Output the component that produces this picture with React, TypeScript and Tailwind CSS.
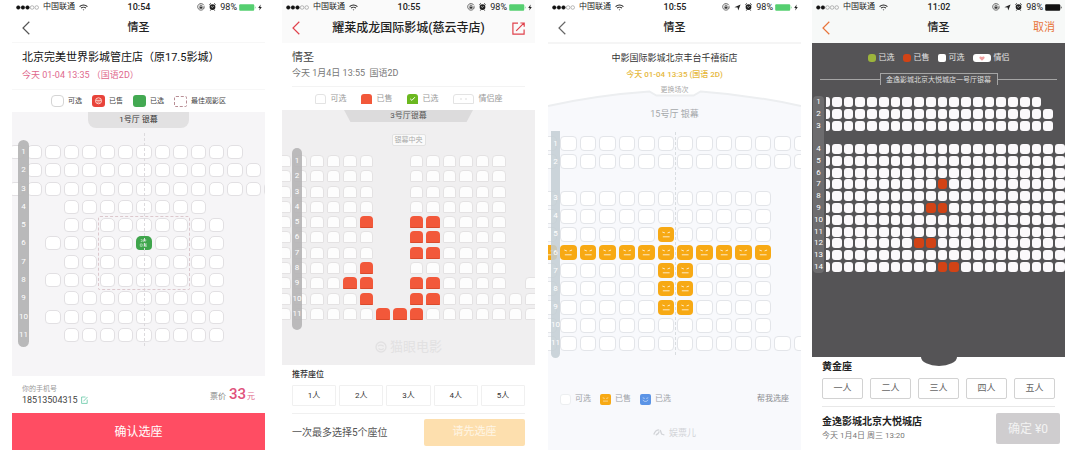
import React from 'react';
import clsx from 'clsx';

type Theme = 'pink' | 'maoyan' | 'yellow' | 'dark';

// o = free, x = sold, s = selected, . = aisle
const PINK_ROWS = [
  'ooooooooooooo..',
  '.ooooooooooooo.',
  'ooooooooooooooo',
  '...oooooooo....',
  '...ooooooooo...',
  '..ooooosoooo...',
  '...ooooooooo...',
  '..oooooooooo...',
  '...ooooooooo...',
  '..oooooooooo...',
  '...ooooooooo...',
];

const MAOYAN_ROWS = [
  'oooooo..oooooo..',
  'oooooo..oooooo..',
  'oooooo..oooooo..',
  'oooooo..oooooo..',
  'ooooox..xxoooo..',
  'oooooo..xxoooo..',
  'oooooo..xxoooo..',
  'ooooox..oooooo..',
  'ooooxx..xxoooo.o',
  'ooooox..xxoooooo',
  'ooooooxxxooooooo',
];

const YELLOW_ROWS = [
  'oooooooooooooo',
  'oooooooooooooo',
  '..............',
  'oooooooooooo..',
  'oooooooooooo..',
  'ooooooxooooo..',
  'xxxxxxxxxxxx..',
  'ooooooxxoooo..',
  'ooooooxxoooo..',
  'ooooooxxoooo..',
  'oooooooooooo..',
  'oooooooooooooo',
];

const DARK_ROWS = [
  'ooooooooooooooooooo..',
  'oooooooooooooooooooo.',
  'oooooooooooooooooooo.',
  '.....................',
  'ooooooooooooooooooooo',
  'ooooooooooooooooooooo',
  'ooooooooooooooooooooo',
  'ooooooooooxoooooooooo',
  'ooooooooooooooooooooo',
  'oooooooooxxoooooooooo',
  'ooooooooooooooooooooo',
  'ooooooooooooooooooooo',
  'ooooooooxxooooooooooo',
  'ooooooooooooooooooooo',
  'ooooooooooxxooooooooo',
];

const seatShape: Record<Theme, string> = {
  pink: 'h-[14px] rounded-t-[5px] rounded-b-[4px]',
  maoyan: 'h-3 rounded-t-[4px] rounded-b-[1px]',
  yellow: 'h-[15px] rounded-[4px]',
  dark: 'h-[10px] rounded-[3px]',
};

const seatColor: Record<Theme, Record<string, string>> = {
  pink: {
    o: 'bg-white border border-[#e2e0e3]',
    x: 'bg-[#e8433a]',
    s: 'bg-[#3fa54c]',
  },
  maoyan: {
    o: 'bg-[#fdfdfd] border border-[#e4e2e3]',
    x: 'bg-[#f2583a] border-b border-[#d94a2c]',
    s: 'bg-[#6bb81f]',
  },
  yellow: {
    o: 'bg-white border border-[#e3e5e9]',
    x: 'bg-[#f7a914]',
    s: 'bg-[#5b94e6]',
  },
  dark: {
    o: 'bg-[#fbf9fb]',
    x: 'bg-[#d24315]',
    s: 'bg-[#9cb43c]',
  },
};

const rowGrid: Record<Theme, string> = {
  pink: 'grid-cols-15 gap-x-[3px] -ml-[3px] -mr-[14px]',
  maoyan: 'grid-cols-16 gap-x-[3px] -ml-[5px] -mr-1',
  yellow: 'grid-cols-14 gap-x-[3px] -ml-[7px] -mr-[9px]',
  dark: 'grid-cols-21 gap-x-[2px] -ml-[6px]',
};

const Face = ({ smile }: { smile?: boolean }) => (
  <svg viewBox="0 0 16 15" className="w-full h-full" fill="none" stroke="#fff" strokeWidth="1" strokeLinecap="round">
    <path d="M4.500 5.200l1.800.6M11.500 5.200l-1.800.6" opacity=".75" />
    <path d={smile ? 'M4.500 8.500c1 2.600 6 2.600 7 0' : 'M5 9.800h6'} opacity=".75" />
  </svg>
);

const SeatMark = ({ theme, kind }: { theme: Theme; kind: string }) => {
  if (theme === 'yellow' && kind !== 'o') return <Face smile={kind === 's'} />;
  if (theme === 'pink' && kind === 's') {
    return (
      <svg viewBox="0 0 16 14" className="w-full h-full" fill="none" stroke="#b9e3be" strokeWidth=".8">
        <path d="M5 3.500h1.500v2H5M8 3v3M8 4h3M9.500 3v3M4.500 8h2v2.500h-2zM8 8h3.500M8 9.300h3.500M8 10.500h3.500M9.800 8v2.500" />
      </svg>
    );
  }
  return null;
};

const SeatMap = ({ theme, rows, name }: { theme: Theme; rows: string[]; name: string }) => (
  <div className="flex flex-col justify-between h-full" role="group" aria-label={name}>
    {rows.map((row, r) => (
      <div key={r} className={clsx('grid', rowGrid[theme])}>
        {row.split('').map((kind, c) =>
          kind === '.' ? (
            <span key={c} className={seatShape[theme]} />
          ) : (
            <button
              key={c}
              type="button"
              disabled={kind === 'x'}
              aria-pressed={kind === 's'}
              className={clsx('block min-w-0 overflow-hidden', seatShape[theme], seatColor[theme][kind])}
            >
              <SeatMark theme={theme} kind={kind} />
            </button>
          )
        )}
      </div>
    ))}
  </div>
);

const RowLabels = ({ labels, className, itemClass }: { labels: string[]; className: string; itemClass: string }) => (
  <div className={clsx('absolute flex flex-col justify-between items-center text-white', className)}>
    {labels.map((l, i) => (
      <span key={i} className={clsx('flex items-center text-[8px] leading-none', itemClass)}>{l}</span>
    ))}
  </div>
);

const count = (n: number) => Array.from({ length: n }, (_, i) => String(i + 1));

interface StatusProps {
  time: string;
  dots?: number;
  location?: boolean;
  charging?: boolean;
}

const StatusLine = ({ time, dots = 3, location, charging = true }: StatusProps) => (
  <div className="flex items-center h-[14px] pl-1 pr-[3px] text-[9px] leading-none text-[#222]">
    <div className="flex flex-1 items-center gap-1">
      <svg width="23" height="5" viewBox="0 0 23 5">
        {[0, 1, 2, 3, 4].map(i => (
          <circle key={i} cx={2.3 + i * 4.6} cy="2.5" r="1.8" fill={i < dots ? '#111' : 'none'} stroke={i < dots ? '#111' : '#777'} strokeWidth=".5" />
        ))}
      </svg>
      <span className="text-[8px]">中国联通</span>
      <svg width="9" height="7" viewBox="0 0 9 7" fill="none" stroke="#222" strokeWidth="1.1">
        <path d="M.6 2.6c2.2-2.1 5.6-2.1 7.8 0M2.1 4.2c1.3-1.3 3.5-1.3 4.8 0" />
        <path d="M3.6 5.4h1.8L4.5 6.5z" fill="#222" stroke="none" />
      </svg>
    </div>
    <span className="font-medium">{time}</span>
    <div className="flex flex-1 items-center justify-end gap-1">
      <svg width="8" height="8" viewBox="0 0 8 8" fill="none" stroke="#333" strokeWidth=".7">
        <path d="M6.9 2.3A3.3 3.3 0 1 0 7.2 4.6M7.8 3.4l-.7 1.1-1-.9" />
        <path d="M3 3.8V3a1 1 0 0 1 2 0v.8" />
        <rect x="2.5" y="3.7" width="3" height="2" fill="#333" stroke="none" />
      </svg>
      {location && (
        <svg width="7" height="7" viewBox="0 0 7 7"><path d="M6.6.4L4.2 6.6 3.6 3.6.4 3.2z" fill="#222" /></svg>
      )}
      <svg width="7" height="8" viewBox="0 0 7 8">
        <path d="M.3 1.8L1.9.4M6.7 1.8L5.1.4M1.3 7.6l.9-1M5.7 7.6l-.9-1" stroke="#222" strokeWidth=".9" />
        <circle cx="3.5" cy="4.1" r="2.9" fill="#222" />
        <path d="M2.1 3.4l1.4 1 1.2-1.3" stroke="#fff" strokeWidth=".6" fill="none" />
      </svg>
      <span>98%</span>
      <div className="flex items-center gap-[2px] -ml-[2px]">
        <svg width="17" height="7" viewBox="0 0 17 7">
          <rect x=".2" y=".2" width="15" height="6.6" rx="1" fill={charging ? '#55cf70' : '#111'} />
          <path d="M15.8 2.3c1 .3 1 2.1 0 2.4z" fill={charging ? '#55cf70' : '#111'} />
        </svg>
        {charging && (
          <svg width="4" height="7" viewBox="0 0 4 7"><path d="M2.6.6L.2 3.9h1.5L1.3 6.5l2.5-3.4H2.3z" fill="#222" /></svg>
        )}
      </div>
    </div>
  </div>
);

interface NavProps {
  title: string;
  back: string;
  titleSize?: string;
  right?: React.ReactNode;
}

const NavBar = ({ title, back, titleSize = 'text-[11px]', right }: NavProps) => (
  <div className="flex items-center h-7 px-[10px]">
    <button type="button" aria-label="返回" className={clsx('w-[22px] shrink-0', back)}>
      <svg width="8" height="14" viewBox="0 0 8 14" fill="none" stroke="currentColor" strokeWidth="1.2">
        <path d="M7.3.8L1 7l6.3 6.2" />
      </svg>
    </button>
    <h1 className={clsx('flex-1 text-center whitespace-nowrap font-medium text-[#222]', titleSize)}>{title}</h1>
    <div className="flex w-[22px] shrink-0 justify-end">{right}</div>
  </div>
);

const Phone = ({ className, children }: { className?: string; children: React.ReactNode }) => (
  <section className={clsx('flex flex-col flex-1 min-w-0 bg-white', className)}>{children}</section>
);

const PinkPhone = () => (
  <Phone className="mr-[6px]">
    <StatusLine time="10:54" />
    <NavBar title="情圣" back="text-[#555]" />
    <div className="flex flex-col justify-center gap-1 h-12 px-[10px] border-y border-[#f7f7f7] whitespace-nowrap">
      <h2 className="text-[11px] leading-[14px] text-[#111]">北京完美世界影城管庄店（原17.5影城）</h2>
      <p className="text-[9px] leading-3 text-[#e0688d]">今天 01-04 13:35 （国语2D）</p>
    </div>
    <div className="flex items-center justify-center gap-[10px] h-[22px] text-[7px] text-[#444]">
      <span className="flex items-center gap-1"><i className="w-[13px] h-3 rounded-[4px] border border-[#d5d5d5]" />可选</span>
      <span className="flex items-center gap-1">
        <i className="w-[13px] h-3 rounded-[3px] bg-[#e8433a]">
          <svg viewBox="0 0 13 12" fill="none" stroke="#ffe3da" strokeWidth=".9"><circle cx="6.5" cy="5.8" r="3" /><path d="M4 5.3h5M5.2 7h2.6" /></svg>
        </i>
        已售
      </span>
      <span className="flex items-center gap-1"><i className="w-[13px] h-3 rounded-[3px] bg-[#43a952]" />已选</span>
      <span className="flex items-center gap-1"><i className="w-[13px] h-[11px] rounded-[2px] border border-dashed border-[#b98f96]" />最佳观影区</span>
    </div>
    <div className="relative flex-1 bg-[#f6f5f7] overflow-hidden">
      <div className="mx-auto w-[101px] h-4 rounded-b-[8px] bg-[#e2e1e2] text-center text-[8px] leading-4 text-[#333]">1号厅 银幕</div>
      <div className="relative mt-[17px] h-[197px]">
        <SeatMap theme="pink" rows={PINK_ROWS} name="1号厅" />
        <div className="absolute left-[132px] -top-3 -bottom-1 border-l border-dashed border-[#dcdadd]" />
        <div className="absolute left-[86px] top-[71px] w-[92px] h-[74px] border border-dashed border-[#dcc8cd] rounded-[2px] pointer-events-none" />
        <RowLabels labels={count(11)} className="left-[6px] -top-[5px] -bottom-[5px] py-[5px] w-[11px] rounded-full bg-[#b3b3b3]/90" itemClass="h-[14px]" />
      </div>
    </div>
    <div className="flex items-center justify-between h-[37px] px-[10px]">
      <div>
        <p className="text-[7px] leading-[10px] text-[#999]">你的手机号</p>
        <p className="flex items-center gap-[3px] text-[9px] leading-3 text-[#444]">
          18513504315
          <svg width="7" height="8" viewBox="0 0 7 8" fill="none" stroke="#63c6a4" strokeWidth=".8">
            <path d="M4.5 1H.6v6.4h5.6V3.6M2.4 5.3L6.6.9" />
          </svg>
        </p>
      </div>
      <p className="flex items-baseline gap-px text-[8px] text-[#888]">
        票价<b className="ml-[2px] text-[15px] leading-none font-medium text-[#e0527c]">33</b><span className="text-[#e0688d]">元</span>
      </p>
    </div>
    <button type="button" className="h-[37px] bg-[#ff4d63] text-[12px] text-white">确认选座</button>
  </Phone>
);

const MaoyanPhone = () => (
  <Phone className="mr-[2px]">
    <div className="bg-[#fafafa] pb-px">
      <StatusLine time="10:55" />
      <NavBar
        title="耀莱成龙国际影城(慈云寺店)"
        titleSize="text-[12px]"
        back="text-[#e0424c]"
        right={
          <button type="button" aria-label="分享" className="text-[#e0424c]">
            <svg width="13" height="13" viewBox="0 0 13 13" fill="none" stroke="currentColor" strokeWidth="1.2">
              <path d="M6 1.2H.9v10.9h11.2V7.5M4.2 8.8L11.8 1.2M8.4 1h3.8v3.8" />
            </svg>
          </button>
        }
      />
    </div>
    <div className="flex flex-col justify-center gap-[2px] h-11 mx-[10px] border-b border-[#f3f3f3]">
      <h2 className="text-[11px] leading-[14px] text-[#444]">情圣</h2>
      <p className="text-[9px] leading-3 text-[#777] whitespace-pre">今天 1月4日 13:55  国语2D</p>
    </div>
    <div className="flex items-center justify-center gap-[14px] h-[23px] text-[8px] text-[#999]">
      <span className="flex items-center gap-[5px]"><i className="w-[11px] h-[10px] rounded-t-[3px] border border-[#e3e3e3]" />可选</span>
      <span className="flex items-center gap-[5px]"><i className="w-[11px] h-[10px] rounded-t-[3px] bg-[#f2583a]" />已售</span>
      <span className="flex items-center gap-[5px]">
        <i className="w-[11px] h-[10px] rounded-t-[3px] bg-[#6bb81f]">
          <svg viewBox="0 0 11 10" fill="none" stroke="#fff" strokeWidth="1"><path d="M3.2 4.8l1.7 1.6 3-3.2" /></svg>
        </i>
        已选
      </span>
      <span className="flex items-center gap-[5px]">
        <i className="flex items-center justify-center w-[21px] h-[10px] rounded-t-[3px] border border-[#e3e3e3]"><svg width="7" height="2" viewBox="0 0 7 2"><path d="M0 1h2M5 1h2" stroke="#ddd" /></svg></i>
        情侣座
      </span>
    </div>
    <div className="flex-1 bg-[#f0eff0] overflow-hidden">
      <div className="mx-auto w-[129px] h-3 bg-[#dcdbdc] text-center text-[8px] leading-3 text-[#555] [clip-path:polygon(0_0,100%_0,95%_100%,5%_100%)]">3号厅银幕</div>
      <div className="mx-auto mt-3 w-[34px] h-3 rounded-[2px] bg-[#fafafa] border border-[#e2e2e2] text-center text-[7px] leading-[10px] text-[#aaa]">银幕中央</div>
      <div className="relative mt-[9px] h-[165px]">
        <SeatMap theme="maoyan" rows={MAOYAN_ROWS} name="3号厅" />
        <RowLabels labels={count(11)} className="left-[10px] -top-[7px] -bottom-[10px] pt-[7px] pb-[10px] w-[10px] rounded-full bg-[#b5b4b5]/90" itemClass="h-3" />
      </div>
      <div className="flex items-center justify-center gap-[3px] mt-[19px] text-[13px] leading-4 text-[#e2e1e2]">
        <svg width="12" height="12" viewBox="0 0 12 12" fill="none" stroke="currentColor" strokeWidth="1.3">
          <circle cx="6" cy="6" r="5" /><path d="M3 5.2c2-2 4-1 5.8 0M3.5 7.5c2 1.6 3.6 1.4 5.2 0" />
        </svg>
        猫眼电影
      </div>
    </div>
    <div className="flex flex-col gap-1 h-12 px-[10px] pt-1 whitespace-nowrap">
      <h3 className="text-[8px] leading-3 font-medium text-[#333]">推荐座位</h3>
      <div className="flex gap-[3px]">
        {['1人', '2人', '3人', '4人', '5人'].map(t => (
          <button key={t} type="button" className="flex-1 h-[21px] rounded-[1px] border border-[#f0f0f0] text-[8px] text-[#333]">{t}</button>
        ))}
      </div>
    </div>
    <div className="flex items-center justify-between h-[37px] mx-[10px] border-t border-[#f0f0f0]">
      <span className="text-[10px] text-[#555]">一次最多选择5个座位</span>
      <button type="button" className="w-[101px] h-[27px] rounded-[2px] bg-[#fddfae] text-[11px] text-[#fff6e6]">请先选座</button>
    </div>
  </Phone>
);

const YellowPhone = () => (
  <Phone>
    <StatusLine time="10:55" location />
    <NavBar title="情圣" back="text-[#666]" />
    <div className="flex flex-col items-center h-[42px] pt-2 gap-[5px] border-t-2 border-[#f5f5f5]">
      <h2 className="text-[9px] leading-3 text-[#333]">中影国际影城北京丰台千禧街店</h2>
      <p className="text-[8px] leading-3 font-medium text-[#e6b83c]">今天 01-04 13:35 (国语 2D)</p>
    </div>
    <div className="relative flex justify-center h-6">
      <svg viewBox="0 0 252 24" preserveAspectRatio="none" className="absolute inset-0 w-full h-full">
        <path d="M0 22Q50 11 101 7.5L108 11.5H145L152 7.5Q202 11 252 22V24H0z" fill="#f8f9fc" />
        <path d="M0 22Q50 11 101 7.5L108 11.5H145L152 7.5Q202 11 252 22" fill="none" stroke="#eceef0" strokeWidth="2" />
      </svg>
      <button type="button" className="relative h-3 text-[7px] leading-3 text-[#aaa]">更换场次</button>
    </div>
    <div className="flex flex-col flex-1 bg-[#f8f9fc] overflow-hidden">
      <p className="text-center text-[9px] leading-3 text-[#a5a8ab]">15号厅 银幕</p>
      <div className="relative mt-4 h-[215px]">
        <SeatMap theme="yellow" rows={YELLOW_ROWS} name="15号厅" />
        <div className="absolute left-1/2 -top-1 -bottom-1 border-l border-dashed border-[#d9dde0]" />
        <RowLabels
          labels={['1', '2', '', '3', '4', '5', '6', '7', '8', '9', '10', '11']}
          className="left-[3px] -top-[5px] -bottom-[7px] pt-[5px] pb-[7px] w-[9px] rounded-b-full bg-[#c3ced3]/85"
          itemClass="h-[15px]"
        />
      </div>
      <div className="flex items-center mt-auto h-5 px-3 text-[8px] text-[#a0a3a8]">
        <div className="flex gap-[9px]">
          <span className="flex items-center gap-1"><i className="w-[11px] h-[11px] rounded-[3px] bg-white border border-[#eceef0]" />可选</span>
          <span className="flex items-center gap-1"><i className="w-[11px] h-[11px] rounded-[2px] bg-[#f7a914]"><Face /></i>已售</span>
          <span className="flex items-center gap-1"><i className="w-[11px] h-[11px] rounded-[2px] bg-[#5b94e6]"><Face smile /></i>已选</span>
        </div>
        <button type="button" className="ml-auto text-[#8b8e92]">帮我选座</button>
      </div>
      <div className="flex items-start justify-center gap-1 h-[41px] pt-[18px] text-[9px] leading-3 text-[#d2d4d8]">
        <svg width="12" height="10" viewBox="0 0 12 10" fill="none" stroke="currentColor" strokeWidth="1.3">
          <path d="M.8 7.5C2 3.5 4 2.8 6.2 2.8M2.8 8c2-.4 3-2 3.4-3.6M7.2 3l1.4 4 2.8 1" />
        </svg>
        娱票儿
      </div>
    </div>
  </Phone>
);

const DarkPhone = () => (
  <Phone>
    <div className="bg-[#f7f9f8] pb-px">
      <StatusLine time="11:02" dots={2} location charging={false} />
      <NavBar
        title="情圣"
        back="text-[#e8743a]"
        right={<button type="button" className="whitespace-nowrap text-[11px] text-[#e8743a]">取消</button>}
      />
    </div>
    <div className="relative flex-1 bg-[#555456]">
      <div className="flex items-center justify-center gap-2 h-[30px] text-[8px] text-[#e4e4e4]">
        <span className="flex items-center gap-[3px]"><i className="w-2 h-2 rounded-[3px] bg-[#9cb43c]" />已选</span>
        <span className="flex items-center gap-[3px]"><i className="w-2 h-2 rounded-[3px] bg-[#d24315]" />已售</span>
        <span className="flex items-center gap-[3px]"><i className="w-2 h-2 rounded-[2px] bg-white" />可选</span>
        <span className="flex items-center gap-[3px]">
          <i className="flex items-center justify-center w-[18px] h-2 rounded-[3px] bg-white">
            <svg width="6" height="5" viewBox="0 0 6 5"><path d="M3 4.8L.7 2.5C-.4 1 1.600-.5 3 1 4.400-.5 6.400 1 5.300 2.500z" fill="#f0a0a0" /></svg>
          </i>
          情侣
        </span>
      </div>
      <div className="flex items-center mx-2">
        <span className="flex-1 h-px bg-[#a5a5a5]" />
        <span className="h-3 w-[118px] border border-b-0 border-[#a5a5a5] text-center text-[7px] leading-3 text-[#ddd] whitespace-nowrap">金逸影城北京大悦城店一号厅银幕</span>
        <span className="flex-1 h-px bg-[#a5a5a5]" />
      </div>
      <div className="relative mt-3 h-[175px] pl-[14px]">
        <div className="h-full overflow-hidden">
          <SeatMap theme="dark" rows={DARK_ROWS} name="一号厅" />
        </div>
        <RowLabels
          labels={['1', '2', '3', '', '4', '5', '6', '7', '8', '9', '10', '11', '12', '13', '14']}
          className="left-px -top-px -bottom-px py-px w-[11px] rounded-[4px] bg-[#6d6c6e]"
          itemClass="h-[10px]"
        />
      </div>
      <div className="absolute left-1/2 top-full -ml-[18px] w-9 h-[9px] rounded-b-[50%_100%] bg-[#555456]" />
    </div>
    <div className="flex flex-col h-[50px] mx-[10px] pt-1 border-b border-[#e8e8e8]">
      <h3 className="text-[10px] leading-3 font-bold text-[#222]">黄金座</h3>
      <div className="flex gap-[7px] mt-[5px]">
        {['一人', '二人', '三人', '四人', '五人'].map(t => (
          <button key={t} type="button" className="flex-1 h-[21px] rounded-[2px] border border-[#d2d2d2] text-[9px] text-[#666]">{t}</button>
        ))}
      </div>
    </div>
    <div className="flex items-center justify-between h-[43px] pl-[10px] pr-[5px] whitespace-nowrap">
      <div>
        <p className="text-[10px] leading-[14px] font-bold text-[#222]">金逸影城北京大悦城店</p>
        <p className="text-[8px] leading-[14px] text-[#777]">今天 1月4日 周三 13:20</p>
      </div>
      <button type="button" className="w-16 h-[31px] rounded-[2px] bg-[#cfcdcf] text-[12px] text-[#f3f3f3]">确定 ¥0</button>
    </div>
  </Phone>
);

export default function App() {
  return (
    <main className="flex min-h-screen gap-[11px] pl-3 pr-[15px] bg-white font-['Roboto','Noto_Sans_CJK_SC',sans-serif]">
      <PinkPhone />
      <MaoyanPhone />
      <YellowPhone />
      <DarkPhone />
    </main>
  );
}
